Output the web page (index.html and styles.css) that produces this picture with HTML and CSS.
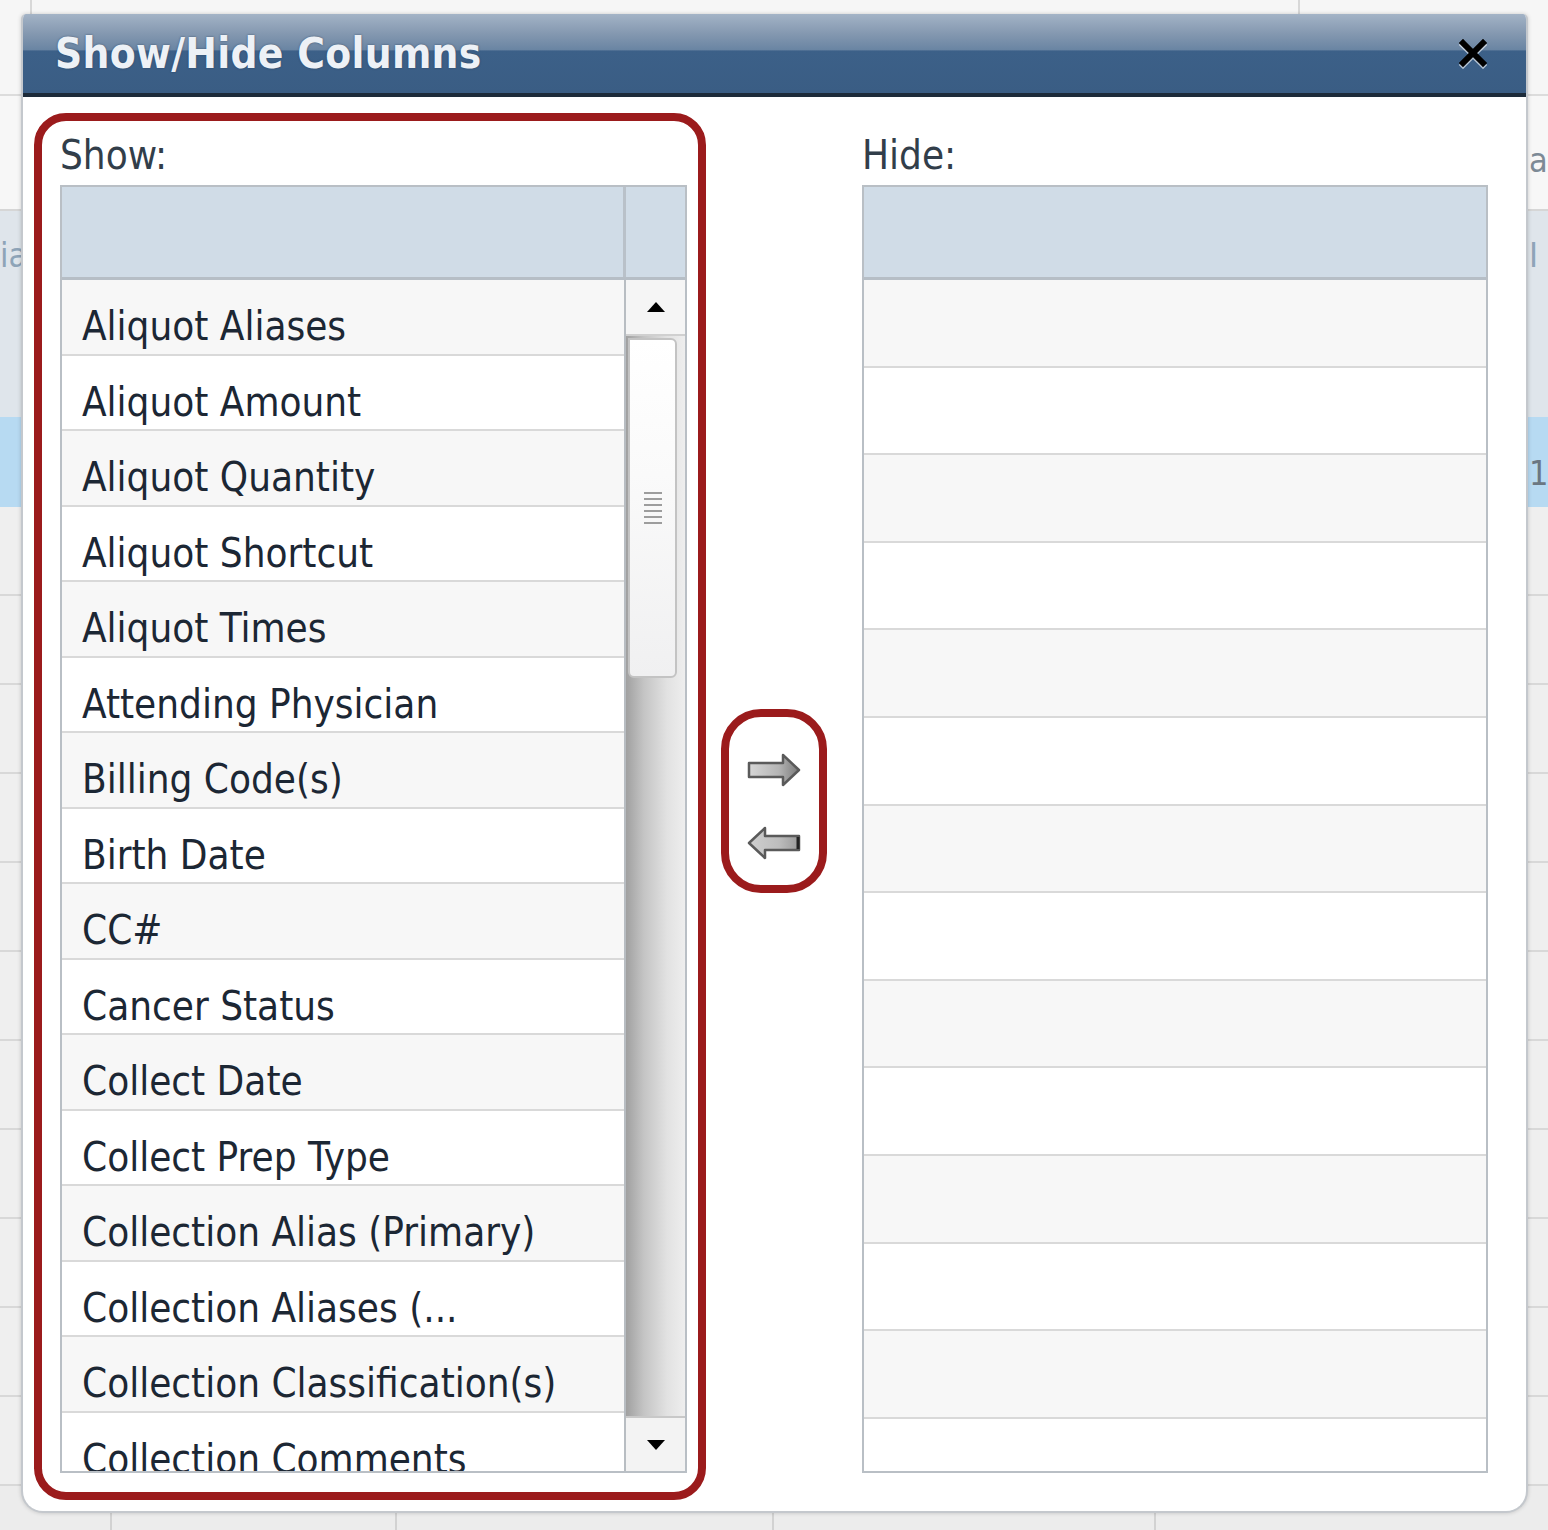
FILE: index.html
```html
<!DOCTYPE html>
<html>
<head>
<meta charset="utf-8">
<title>Show/Hide Columns</title>
<link rel="stylesheet" href="styles.css">
</head>
<body>
<div class="backdrop">
  <div class="bd-top"><span class="bd-cell c1"></span><span class="bd-cell c2"></span></div>
  <div class="bd-pre"><span class="bd-txt-r top">a</span></div>
  <div class="bd-head"><span class="bd-txt-l">ia</span><span class="bd-txt-r">I</span></div>
  <div class="bd-sel"><span class="bd-txt-r">1</span></div>
  <div class="bd-row"></div><div class="bd-row"></div><div class="bd-row"></div><div class="bd-row"></div>
  <div class="bd-row"></div><div class="bd-row"></div><div class="bd-row"></div><div class="bd-row"></div>
  <div class="bd-row"></div><div class="bd-row"></div><div class="bd-row"></div>
  <div class="bd-bottom"><span class="bd-col b1"></span><span class="bd-col b2"></span><span class="bd-col b3"></span><span class="bd-col b4"></span></div>
</div>

<div class="dialog">
  <div class="titlebar">
    <span class="title">Show/Hide Columns</span>
    <svg class="close" width="30" height="30" viewBox="0 0 30 30">
      <path d="M5 6 L25 26 M25 6 L5 26" stroke="#ffffff" stroke-opacity="0.6" stroke-width="6" stroke-linecap="square"/>
      <path d="M5 4 L25 24 M25 4 L5 24" stroke="#000000" stroke-width="6" stroke-linecap="square"/>
    </svg>
  </div>
  <div class="content">
    <div class="panel hl">
      <div class="label">Show:</div>
      <div class="grid">
        <div class="ghead"><div class="gh-main"></div><div class="gh-sb"></div></div>
        <div class="gbody">
          <div class="list">
            <div class="row">Aliquot Aliases</div>
            <div class="row">Aliquot Amount</div>
            <div class="row">Aliquot Quantity</div>
            <div class="row">Aliquot Shortcut</div>
            <div class="row">Aliquot Times</div>
            <div class="row">Attending Physician</div>
            <div class="row">Billing Code(s)</div>
            <div class="row">Birth Date</div>
            <div class="row">CC#</div>
            <div class="row">Cancer Status</div>
            <div class="row">Collect Date</div>
            <div class="row">Collect Prep Type</div>
            <div class="row">Collection Alias (Primary)</div>
            <div class="row">Collection Aliases (...</div>
            <div class="row">Collection Classification(s)</div>
            <div class="row">Collection Comments</div>
          </div>
          <div class="scrollbar">
            <div class="sb-btn"><span class="tri-up"></span></div>
            <div class="sb-thumb"><div class="grip"><i></i><i></i><i></i><i></i><i></i><i></i></div></div>
            <div class="sb-track"></div>
            <div class="sb-btn down"><span class="tri-down"></span></div>
          </div>
        </div>
      </div>
    </div>

    <div class="movebox">
      <svg class="arrow" width="56" height="36" viewBox="0 0 56 36">
        <defs>
          <linearGradient id="ag" x1="0" y1="0" x2="1" y2="0">
            <stop offset="0" stop-color="#d6d6d6"/>
            <stop offset="0.6" stop-color="#b4b4b4"/>
            <stop offset="1" stop-color="#7a7a7a"/>
          </linearGradient>
        </defs>
        <path d="M3 11 H37 V3 L53 18 L37 33 V25 H3 Z" fill="url(#ag)" stroke="#5a5a5a" stroke-width="2.5" stroke-linejoin="round"/>
      </svg>
      <svg class="arrow" width="56" height="36" viewBox="0 0 56 36">
        <defs>
          <linearGradient id="ag2" x1="0" y1="0" x2="1" y2="0">
            <stop offset="0" stop-color="#cfcfcf"/>
            <stop offset="0.6" stop-color="#bdbdbd"/>
            <stop offset="1" stop-color="#9a9a9a"/>
          </linearGradient>
        </defs>
        <path d="M53 11 H19 V3 L3 18 L19 33 V25 H53 Z" fill="url(#ag2)" stroke="#5a5a5a" stroke-width="2.5" stroke-linejoin="round"/>
        <path d="M52 12 V24" stroke="#222" stroke-width="3"/>
      </svg>
    </div>

    <div class="panel plain">
      <div class="label">Hide:</div>
      <div class="grid">
        <div class="ghead"><div class="gh-main"></div></div>
        <div class="list tall">
          <div class="row"></div><div class="row"></div><div class="row"></div><div class="row"></div>
          <div class="row"></div><div class="row"></div><div class="row"></div><div class="row"></div>
          <div class="row"></div><div class="row"></div><div class="row"></div><div class="row"></div>
          <div class="row"></div><div class="row"></div>
        </div>
      </div>
    </div>
  </div>
</div>
</body>
</html>
```

FILE: styles.css
```css
html, body {
  margin: 0;
  padding: 0;
}
body {
  width: 1548px;
  height: 1530px;
  overflow: hidden;
  background: #f3f3f3;
  position: relative;
  font-family: "DejaVu Sans Condensed", "DejaVu Sans", "Liberation Sans", sans-serif;
  font-stretch: condensed;
}

/* ---------- page behind the dialog ---------- */
.backdrop {
  display: flex;
  flex-direction: column;
  width: 1548px;
  height: 1530px;
}
.bd-top {
  height: 94px;
  border-bottom: 2px solid #dcdcdc;
  display: flex;
  background: #f6f6f6;
}
.bd-cell { display: block; border-right: 2px solid #d8d8d8; height: 14px; }
.bd-cell.c1 { width: 30px; }
.bd-cell.c2 { width: 1266px; }
.bd-pre {
  height: 113px;
  background: #f7f7f7;
  border-bottom: 2px solid #d6d6d6;
  position: relative;
}
.bd-head {
  height: 206px;
  background: #dfe5eb;
  position: relative;
}
.bd-sel {
  height: 90px;
  background: #b7daf2;
  position: relative;
}
.bd-row {
  height: 87px;
  border-bottom: 2px solid #d8d8d8;
  background: #efefef;
}
.bd-bottom {
  flex: 1;
  display: flex;
  background: #ececec;
}
.bd-col { display: block; border-right: 2px solid #d2d2d2; }
.bd-col.b1 { width: 110px; }
.bd-col.b2 { width: 283px; }
.bd-col.b3 { width: 375px; }
.bd-col.b4 { width: 380px; }
.bd-txt-l, .bd-txt-r {
  position: absolute;
  font-size: 34px;
  color: #8ea4b8;
  top: 24px;
}
.bd-txt-l { left: 0; }
.bd-txt-r { left: 1529px; }
.bd-txt-r.top { top: 44px; color: #7d8a96; }
.bd-sel .bd-txt-r { top: 36px; color: #6b7782; }

/* ---------- dialog ---------- */
.dialog {
  position: absolute;
  left: 21px;
  top: 14px;
  width: 1507px;
  height: 1499px;
  box-sizing: border-box;
  background: #ffffff;
  border: 2px solid #c4c8cd;
  border-top: none;
  border-radius: 5px 5px 22px 22px;
  box-shadow: 0 0 4px rgba(0, 0, 0, 0.18);
  overflow: hidden;
}
.titlebar {
  height: 83px;
  box-sizing: border-box;
  border-bottom: 4px solid #1d2b3a;
  background: linear-gradient(to bottom, #a3b3c6 0%, #8498b0 25%, #6a85a3 45%, #3c6088 47%, #3a5d84 100%);
  display: flex;
  align-items: center;
  padding: 0 38px 0 32px;
}
.title {
  flex: 1;
  font-size: 42px;
  font-weight: bold;
  color: #edf1f6;
  text-shadow: 0 0 2px rgba(30, 50, 75, 0.7);
  letter-spacing: 0.3px;
}
.close {
  display: block;
}

.content {
  display: flex;
  align-items: flex-start;
  padding: 16px 0 0 11px;
}

.panel {
  box-sizing: border-box;
}
.panel.hl {
  width: 672px;
  height: 1387px;
  border: 8px solid #9b1b1c;
  border-radius: 32px;
  padding: 10px 11px 0 18px;
}
.panel.plain {
  margin-left: 35px;
  padding-top: 18px;
}
.label {
  font-size: 40px;
  line-height: 48px;
  color: #323e4a;
  margin-bottom: 6px;
}

.grid {
  width: 627px;
  height: 1288px;
  box-sizing: border-box;
  border: 2px solid #b9bfc5;
  overflow: hidden;
  background: #ffffff;
  display: flex;
  flex-direction: column;
}
.panel.plain .grid { width: 626px; }
.ghead {
  height: 93px;
  flex: none;
  box-sizing: border-box;
  border-bottom: 3px solid #b6bec6;
  background: #d0dce7;
  display: flex;
}
.gh-main { flex: 1; }
.gh-sb {
  width: 59px;
  border-left: 3px solid #b9c1c9;
}
.gbody {
  flex: 1;
  display: flex;
  min-height: 0;
}
.list {
  flex: 1;
  overflow: hidden;
  border-right: 2px solid #b8bdc2;
}
.list.tall { border-right: none; }
.row {
  height: 75.5px;
  box-sizing: border-box;
  border-bottom: 2px solid #d9d9d9;
  padding: 18px 0 0 20px;
  line-height: 56px;
  font-size: 40px;
  color: #1c2734;
  white-space: nowrap;
  background: #ffffff;
}
.row:nth-child(odd) { background: #f7f7f7; }
.list.tall .row { height: 87.6px; padding: 0; }

/* scrollbar */
.scrollbar {
  width: 59px;
  display: flex;
  flex-direction: column;
  background: linear-gradient(to right, #a0a0a0 0%, #c4c4c4 30%, #e2e2e2 70%, #eeeeee 100%);
}
.sb-btn {
  height: 56px;
  flex: none;
  background: #f5f5f5;
  border-bottom: 2px solid #d0d0d0;
  display: flex;
  align-items: center;
  justify-content: center;
  box-sizing: border-box;
}
.sb-btn.down {
  border-bottom: none;
  border-top: 2px solid #c8c8c8;
  height: 55px;
  background: #f3f3f3;
}
.tri-up {
  width: 0;
  height: 0;
  border-left: 9px solid transparent;
  border-right: 9px solid transparent;
  border-bottom: 10px solid #000;
}
.tri-down {
  width: 0;
  height: 0;
  border-left: 9px solid transparent;
  border-right: 9px solid transparent;
  border-top: 10px solid #000;
}
.sb-thumb {
  height: 340px;
  flex: none;
  margin: 2px 8px 0 2px;
  box-sizing: border-box;
  border: 2px solid #c3c3c3;
  border-radius: 0 6px 6px 6px;
  background: linear-gradient(to bottom, #ffffff 0%, #fafafa 40%, #f0f0f1 100%);
  display: flex;
  align-items: center;
  justify-content: center;
}
.grip {
  display: flex;
  flex-direction: column;
  gap: 4px;
}
.grip i {
  display: block;
  width: 18px;
  height: 2px;
  background: #9d9d9d;
}
.sb-track {
  flex: 1;
}

/* move buttons */
.movebox {
  margin: 596px 0 0 15px;
  width: 106px;
  height: 184px;
  box-sizing: border-box;
  border: 8px solid #9b1b1c;
  border-radius: 40px;
  display: flex;
  flex-direction: column;
  align-items: center;
  padding-top: 35px;
  gap: 37px;
}
.arrow { display: block; }
```
